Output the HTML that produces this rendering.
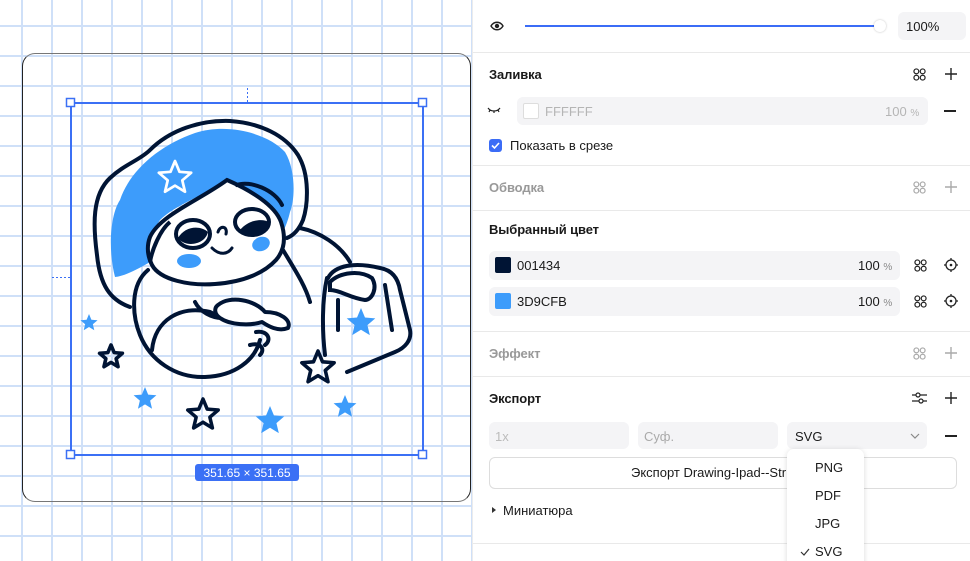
<!DOCTYPE html>
<html><head><meta charset="utf-8"><style>
*{margin:0;padding:0;box-sizing:border-box}
body{width:970px;height:561px;overflow:hidden;position:relative;background:#fff;font-family:"Liberation Sans","Noto Sans CJK SC",sans-serif;color:#1a1a1a;font-size:12px}
.canvas{position:absolute;left:0;top:0;width:472px;height:561px;background-color:#fff;
background-image:linear-gradient(to right,#cfe0f8 2px,transparent 2px),linear-gradient(to bottom,#cfe0f8 2px,transparent 2px);
background-size:30px 30px;background-position:21px 25px}
.card{position:absolute;left:22px;top:53px;width:449px;height:449px;border:1px solid #222;border-top-color:#777;border-bottom-color:#777;border-radius:13px}
.panel{position:absolute;left:472px;top:0;width:498px;height:561px;background:#fff;border-left:1px solid #ececec;overflow:hidden}
.abs{position:absolute}
.hr{position:absolute;left:0;right:0;height:1px;background:#e9e9e9}
.h{position:absolute;left:16px;font-size:13px;font-weight:bold;color:#1a1a1a;letter-spacing:-0.1px}
.inp{position:absolute;background:#f4f4f6;border-radius:6px}
.ic{position:absolute;font-size:17px;line-height:17px;color:#222}
.t{font-size:13px}
</style></head><body>
<svg width="0" height="0" style="position:absolute"><defs>
<symbol id="cmd" viewBox="0 0 14 14"><g fill="none" stroke="currentColor" stroke-width="1.3"><circle cx="3.6" cy="3.6" r="2.6"/><circle cx="10.4" cy="3.6" r="2.6"/><circle cx="3.6" cy="10.4" r="2.6"/><circle cx="10.4" cy="10.4" r="2.6"/></g></symbol>
<symbol id="plus" viewBox="0 0 14 14"><path d="M7,1V13M1,7H13" stroke="currentColor" stroke-width="1.4"/></symbol>
</defs></svg>
<div class="canvas">
<div class="card"></div>
<svg class="abs" style="left:0;top:0" width="472" height="561" viewBox="0 0 472 561">
<defs>
<path id="st" d="M0,-1 L.265,-.364 L.951,-.309 L.428,.139 L.588,.809 L0,.45 L-.588,.809 L-.428,.139 L-.951,-.309 L-.265,-.364Z"/>
</defs>
<path d="M115,277 C108,250 110,215 120,200 C130,170 160,145 195,133 C230,122 270,135 285,152 C296,170 295,200 290,212 C287,225 283,232 280,236 L283,250 C270,230 255,205 227,180 C205,195 175,205 160,220 C150,235 148,255 150,262 C140,268 125,276 115,277Z" fill="#3d9cfb"/>
<path d="M150,237 C160,215 200,200 227,180 C250,190 275,205 281,222 C287,240 283,252 276,260 C265,272 245,282 215,284 C190,286 160,280 152,265 C147,255 147,245 150,237Z" fill="#fff" stroke="#001434" stroke-width="4"/>
<path d="M150,262 C152,250 160,230 170,222" fill="none" stroke="#001434" stroke-width="4"/>
<path d="M130,307 C110,300 100,285 97,255 C93,225 92,195 110,178 C125,164 140,160 150,150 C170,130 200,120 230,121 C260,123 285,135 298,155 C310,175 308,205 303,220 C298,232 292,236 287,238" fill="none" stroke="#001434" stroke-width="4" stroke-linecap="round"/>
<path d="M237,185 C250,180 275,190 282,205" fill="none" stroke="#001434" stroke-width="4" stroke-linecap="round"/>
<ellipse cx="193" cy="234" rx="17" ry="14" fill="#fff" stroke="#001434" stroke-width="4"/>
<path d="M178,238 C185,226 200,225 208,232 C205,245 185,248 178,238Z" fill="#001434"/>
<ellipse cx="252" cy="222" rx="17" ry="13" fill="#fff" stroke="#001434" stroke-width="4"/>
<path d="M240,230 C248,220 262,218 269,222 C268,234 250,238 240,230Z" fill="#001434"/>
<path d="M218,232 C220,225 228,226 226,234" fill="none" stroke="#001434" stroke-width="3" stroke-linecap="round"/>
<path d="M212,248 C220,256 228,254 232,248" fill="none" stroke="#001434" stroke-width="3" stroke-linecap="round"/>
<ellipse cx="189" cy="261" rx="12" ry="7" fill="#3d9cfb"/>
<ellipse cx="261" cy="244" rx="9" ry="7" fill="#3d9cfb" transform="rotate(-20 261 244)"/>
<path d="M148,270 C130,285 132,315 140,335 C150,360 175,378 205,377 C235,376 255,360 260,340" fill="none" stroke="#001434" stroke-width="4" stroke-linecap="round"/>
<path d="M152,350 C155,320 180,305 210,312 C220,318 230,318 240,316" fill="none" stroke="#001434" stroke-width="4" stroke-linecap="round"/>
<path d="M195,302 C200,312 212,318 222,318" fill="none" stroke="#001434" stroke-width="4" stroke-linecap="round"/>
<path d="M218,305 C230,295 255,300 265,312 C280,312 292,320 288,328 C278,332 268,326 262,322 C250,326 230,325 220,318 C214,314 214,308 218,305Z" fill="#fff" stroke="#001434" stroke-width="4" stroke-linejoin="round"/>
<path d="M256,332 C268,330 272,340 265,345 M250,345 C262,342 265,350 260,355" fill="none" stroke="#001434" stroke-width="4" stroke-linecap="round"/>
<path d="M283,250 C295,270 305,285 310,302" fill="none" stroke="#001434" stroke-width="4" stroke-linecap="round"/>
<path d="M300,228 C320,232 340,245 350,262" fill="none" stroke="#001434" stroke-width="4" stroke-linecap="round"/>
<path d="M328,278 C335,265 355,262 380,268 C392,270 398,278 400,290 L410,330 C412,340 405,348 395,352 L347,372 M327,278 C322,300 322,330 325,355" fill="none" stroke="#001434" stroke-width="4" stroke-linecap="round"/>
<path d="M338,300 L338,330 M385,285 L392,330" fill="none" stroke="#001434" stroke-width="4" stroke-linecap="round"/>
<path d="M330,282 C340,272 360,270 372,278 C378,288 372,300 365,300 C350,298 340,290 330,290Z" fill="#fff" stroke="#001434" stroke-width="4"/>
<g fill="#3d9cfb">
<use href="#st" transform="translate(89,323) scale(9)"/>
<use href="#st" transform="translate(145,399) scale(12)"/>
<use href="#st" transform="translate(270,421) scale(15)"/>
<use href="#st" transform="translate(345,407) scale(12)"/>
<use href="#st" transform="translate(361,323) scale(15)"/>
</g>
<g fill="none" stroke="#001434" stroke-linejoin="round">
<use href="#st" transform="translate(111,357) scale(12)" stroke-width=".3"/>
<use href="#st" transform="translate(203,415) scale(16)" stroke-width=".22"/>
<use href="#st" transform="translate(318,368) scale(17)" stroke-width=".21"/>
</g>
<use href="#st" transform="translate(175,178) scale(17)" fill="none" stroke="#fff" stroke-width=".16" stroke-linejoin="round"/>
<rect x="71" y="103" width="352" height="352" fill="none" stroke="#3b70f5" stroke-width="2"/>
<g fill="#fff" stroke="#3b70f5" stroke-width="1.5">
<rect x="66.5" y="98.5" width="8" height="8"/><rect x="418.5" y="98.5" width="8" height="8"/>
<rect x="66.5" y="450.5" width="8" height="8"/><rect x="418.5" y="450.5" width="8" height="8"/>
</g>
<path d="M247.5,88 V102 M52,277.5 H70" stroke="#3b70f5" stroke-width="1" stroke-dasharray="2,2"/>
<rect x="195" y="464" width="104" height="17" rx="3" fill="#3b70f5"/>
<text x="247" y="477" text-anchor="middle" fill="#fff" font-size="12" font-family="Liberation Sans">351.65 × 351.65</text>
</svg>
</div>

<div class="panel">
<svg class="abs" style="left:17px;top:19px" width="14" height="14" viewBox="0 0 14 14"><path d="M1,7 C4,2 10,2 13,7 C10,12 4,12 1,7Z" fill="none" stroke="#222" stroke-width="1.4"/><circle cx="7" cy="7" r="2.2" fill="#222"/></svg>
<div class="abs" style="left:52px;top:25px;width:356px;height:2px;background:#3b6cf6"></div>
<div class="abs" style="left:401px;top:20px;width:12px;height:12px;border-radius:50%;background:#fff;box-shadow:0 0 2px rgba(0,0,0,.25)"></div>
<div class="inp" style="left:425px;top:12px;width:68px;height:28px"></div>
<div class="abs t" style="left:433px;top:19px">100%</div>
<div class="hr" style="top:52px"></div>

<div class="h" style="top:67px">Заливка</div>
<svg class="abs" style="left:440px;top:68px;color:#222" width="13" height="13"><use href="#cmd"/></svg>
<svg class="abs" style="left:471px;top:67px;color:#222" width="14" height="14"><use href="#plus"/></svg>
<svg class="abs" style="left:14px;top:105px" width="14" height="10" viewBox="0 0 14 10"><path d="M1,3 C4,7 10,7 13,3 M3,5 L2,7 M7,6 L7,8 M11,5 L12,7" fill="none" stroke="#222" stroke-width="1.2"/></svg>
<div class="inp" style="left:44px;top:97px;width:411px;height:28px"></div>
<div class="abs" style="left:50px;top:103px;width:16px;height:16px;background:#fff;border:1px solid #ddd;border-radius:2px"></div>
<div class="abs t" style="left:72px;top:104px;color:#b5b5b5">FFFFFF</div>
<div class="abs t" style="left:412px;top:104px;color:#b5b5b5">100 <span style="font-size:10px">%</span></div>
<div class="abs" style="left:471px;top:110px;width:12px;height:1.5px;background:#222"></div>
<div class="abs" style="left:16px;top:139px;width:13px;height:13px;background:#3b6cf6;border-radius:3px"><svg width="13" height="13"><path d="M3,6.5 L5.5,9 L10,4" fill="none" stroke="#fff" stroke-width="1.6"/></svg></div>
<div class="abs t" style="left:37px;top:138px">Показать в срезе</div>
<div class="hr" style="top:165px"></div>

<div class="h" style="top:180px;color:#999">Обводка</div>
<svg class="abs" style="left:440px;top:181px;color:#aaa" width="13" height="13"><use href="#cmd"/></svg>
<svg class="abs" style="left:471px;top:180px;color:#aaa" width="14" height="14"><use href="#plus"/></svg>
<div class="hr" style="top:210px"></div>

<div class="h" style="top:222px">Выбранный цвет</div>
<div class="inp" style="left:16px;top:251px;width:411px;height:29px"></div>
<div class="abs" style="left:22px;top:257px;width:16px;height:16px;background:#001434;border-radius:2px"></div>
<div class="abs t" style="left:44px;top:258px">001434</div>
<div class="abs t" style="left:385px;top:258px">100 <span style="font-size:10px;color:#888">%</span></div>
<svg class="abs" style="left:441px;top:259px;color:#222" width="13" height="13"><use href="#cmd"/></svg>
<svg class="abs" style="left:471px;top:258px" width="14" height="14" viewBox="0 0 14 14"><circle cx="7" cy="7" r="5" fill="none" stroke="#222" stroke-width="1.3"/><circle cx="7" cy="7" r="1.3" fill="#222"/><path d="M7,0V2M7,12V14M0,7H2M12,7H14" stroke="#222" stroke-width="1.3"/></svg>
<div class="inp" style="left:16px;top:287px;width:411px;height:29px"></div>
<div class="abs" style="left:22px;top:293px;width:16px;height:16px;background:#3d9cfb;border-radius:2px"></div>
<div class="abs t" style="left:44px;top:294px">3D9CFB</div>
<div class="abs t" style="left:385px;top:294px">100 <span style="font-size:10px;color:#888">%</span></div>
<svg class="abs" style="left:441px;top:295px;color:#222" width="13" height="13"><use href="#cmd"/></svg>
<svg class="abs" style="left:471px;top:294px" width="14" height="14" viewBox="0 0 14 14"><circle cx="7" cy="7" r="5" fill="none" stroke="#222" stroke-width="1.3"/><circle cx="7" cy="7" r="1.3" fill="#222"/><path d="M7,0V2M7,12V14M0,7H2M12,7H14" stroke="#222" stroke-width="1.3"/></svg>
<div class="hr" style="top:331px"></div>

<div class="h" style="top:346px;color:#999">Эффект</div>
<svg class="abs" style="left:440px;top:347px;color:#aaa" width="13" height="13"><use href="#cmd"/></svg>
<svg class="abs" style="left:471px;top:346px;color:#aaa" width="14" height="14"><use href="#plus"/></svg>
<div class="hr" style="top:376px"></div>

<div class="h" style="top:391px">Экспорт</div>
<svg class="abs" style="left:439px;top:391px" width="15" height="14" viewBox="0 0 15 14"><path d="M0,4H15M0,10H15" stroke="#222" stroke-width="1.2"/><circle cx="6" cy="4" r="2" fill="#fff" stroke="#222" stroke-width="1.2"/><circle cx="9" cy="10" r="2" fill="#fff" stroke="#222" stroke-width="1.2"/></svg>
<svg class="abs" style="left:471px;top:391px;color:#222" width="14" height="14"><use href="#plus"/></svg>
<div class="inp" style="left:16px;top:422px;width:140px;height:27px"></div>
<div class="abs t" style="left:22px;top:429px;color:#bbb">1x</div>
<div class="inp" style="left:165px;top:422px;width:140px;height:27px"></div>
<div class="abs t" style="left:171px;top:429px;color:#aaa">Суф.</div>
<div class="inp" style="left:314px;top:422px;width:140px;height:27px"></div>
<div class="abs t" style="left:322px;top:429px">SVG</div>
<svg class="abs" style="left:437px;top:433px" width="10" height="6"><path d="M1,1 L5,5 L9,1" fill="none" stroke="#888" stroke-width="1.2"/></svg>
<div class="abs" style="left:472px;top:435px;width:12px;height:1.5px;background:#222"></div>
<div class="abs" style="left:16px;top:457px;width:468px;height:32px;border:1px solid #ddd;border-radius:6px"></div>
<div class="abs t" style="left:158px;top:465px">Экспорт Drawing-Ipad--Str</div>
<div class="abs" style="left:19px;top:507px;width:0;height:0;border-left:4px solid #333;border-top:3.5px solid transparent;border-bottom:3.5px solid transparent"></div>
<div class="abs t" style="left:30px;top:503px">Миниатюра</div>
<div class="hr" style="top:543px"></div>

<div class="abs" style="left:314px;top:449px;width:77px;height:120px;background:#fff;border-radius:7px;box-shadow:0 1px 6px rgba(0,0,0,.15)"></div>
<div class="abs t" style="left:342px;top:460px">PNG</div>
<div class="abs t" style="left:342px;top:488px">PDF</div>
<div class="abs t" style="left:342px;top:516px">JPG</div>
<svg class="abs" style="left:327px;top:548px" width="10" height="8"><path d="M1,4 L4,7 L9,1" fill="none" stroke="#333" stroke-width="1.2"/></svg>
<div class="abs t" style="left:342px;top:544px">SVG</div>
</div>
</body></html>
